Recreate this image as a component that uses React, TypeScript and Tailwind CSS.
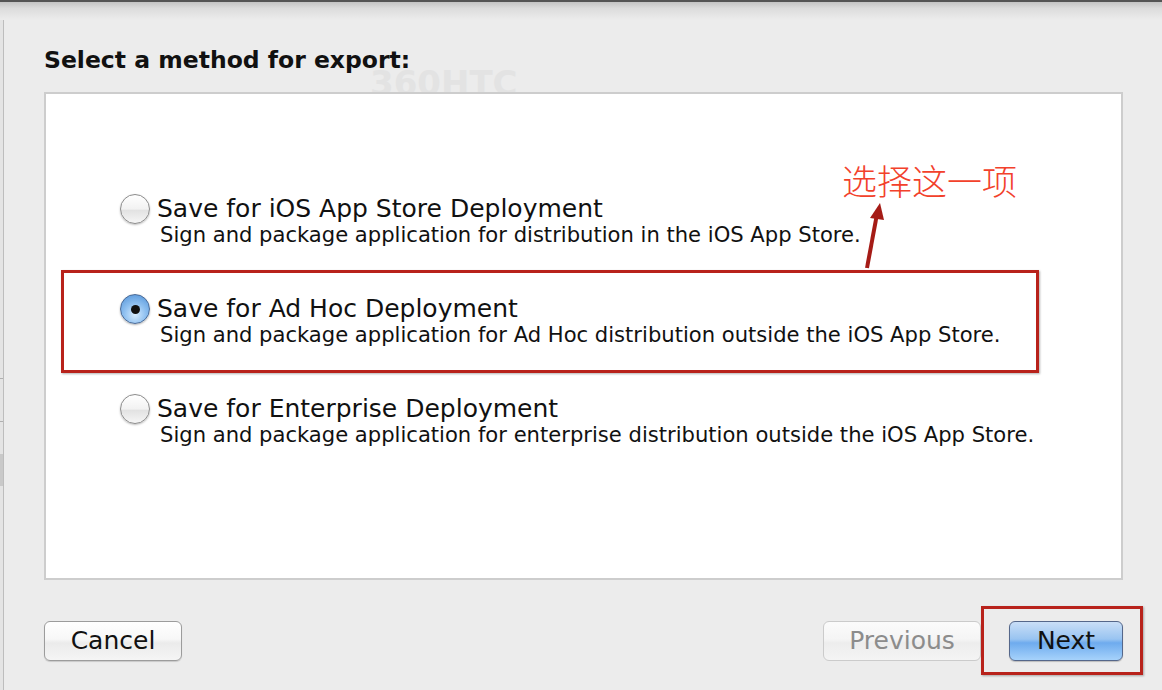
import { useState } from 'react';

const font = { fontFamily: '"DejaVu Sans", "Noto Sans CJK SC", sans-serif' };

const options = [
  {
    title: 'Save for iOS App Store Deployment',
    desc: 'Sign and package application for distribution in the iOS App Store.',
  },
  {
    title: 'Save for Ad Hoc Deployment',
    desc: 'Sign and package application for Ad Hoc distribution outside the iOS App Store.',
  },
  {
    title: 'Save for Enterprise Deployment',
    desc: 'Sign and package application for enterprise distribution outside the iOS App Store.',
  },
];

const Radio = ({ checked }: { checked: boolean }) =>
  checked ? (
    <span className="flex h-[30px] w-[30px] shrink-0 items-center justify-center rounded-full border border-[#4a6a96] bg-[radial-gradient(circle_at_50%_70%,#d6ecff_0%,#8fc0f0_45%,#4d8fd6_100%)] shadow-[0_1px_2px_rgba(0,0,0,0.3)]">
      <span className="h-[9px] w-[9px] rounded-full bg-[#111]" />
    </span>
  ) : (
    <span className="h-[30px] w-[30px] shrink-0 rounded-full border border-[#8c8c8c] bg-[linear-gradient(#ffffff,#f2f2f2_50%,#e2e2e2_55%,#f6f6f6)] shadow-[0_1px_2px_rgba(0,0,0,0.25)]" />
  );

export default function App() {
  const [selected, setSelected] = useState(1);

  return (
    <div className="relative h-[690px] w-[1162px] overflow-hidden bg-[#ececec]" style={font}>
      {/* window top edge */}
      <div className="h-[2px] bg-[#555]" />
      <div className="h-[18px] bg-[linear-gradient(#c4c4c4,#dcdcdc_35%,#ececec)]" />

      <div className="flex h-[670px]">
        {/* sliver of the window behind */}
        <div className="flex w-[4px] shrink-0 flex-col border-r border-[#bdbdbd] bg-[#e4e4e4]">
          <div className="h-[358px]" />
          <div className="h-[44px] border-y border-[#b0b0b0]" />
          <div className="mt-[32px] h-[32px] bg-[#c9c9c9]" />
        </div>

        <div className="flex flex-1 flex-col pl-[40px] pr-[39px]">
          <h1 className="relative mt-[26px] text-[23.5px] font-bold leading-[28px] text-[#111]">
            Select a method for export:
          </h1>
          <div className="pointer-events-none absolute left-[370px] top-[63px] select-none text-[34px] font-bold leading-[40px] text-[#e3e3e3]">
            360HTC
          </div>

          <div className="relative mt-[18px] flex h-[488px] flex-col border-2 border-[#cdcdcd] bg-white pl-[74px] pt-[100px]">
            {options.map((o, i) => (
              <label
                key={o.title}
                className="flex h-[100px] cursor-default items-start gap-[7px]"
                onClick={() => setSelected(i)}
              >
                <Radio checked={selected === i} />
                <div className="flex flex-col pt-[2px]">
                  <span className="w-fit text-[25px] leading-[26px] text-[#111]">{o.title}</span>
                  <span className="ml-[3px] mt-[1px] w-fit text-[21.1px] leading-[24px] text-[#111]">{o.desc}</span>
                </div>
              </label>
            ))}
          </div>

          <div className="mt-[41px] flex items-center">
            <button className="h-[40px] w-[138px] rounded-[6px] border border-[#9c9c9c] bg-[linear-gradient(#ffffff,#f7f7f7_45%,#ebebeb_55%,#f5f5f5)] text-[25px] text-[#111] shadow-[0_1px_1px_rgba(0,0,0,0.15)]">
              Cancel
            </button>
            <div className="flex-1" />
            <button
              disabled
              className="h-[40px] w-[158px] rounded-[6px] border border-[#cbcbcb] bg-[linear-gradient(#fbfbfb,#f5f5f5_45%,#ededed_55%,#f4f4f4)] text-[25px] text-[#8c8c8c]"
            >
              Previous
            </button>
            <button className="ml-[28px] h-[40px] w-[114px] rounded-[6px] border border-[#55678a] bg-[linear-gradient(#c9def7,#99c4f1_45%,#6eabee_55%,#a6d2fb)] text-[25px] text-[#111] shadow-[0_1px_1px_rgba(0,0,0,0.2)]">
              Next
            </button>
          </div>
        </div>
      </div>

      {/* annotations */}
      <div className="pointer-events-none absolute left-[61px] top-[270px] h-[103px] w-[978px] border-[3px] border-[#b8221b] shadow-[1px_1px_2px_rgba(0,0,0,0.3)]" />
      <div className="pointer-events-none absolute left-[981px] top-[606px] h-[69px] w-[162px] border-[3px] border-[#b8221b] shadow-[1px_1px_2px_rgba(0,0,0,0.3)]" />
      <svg className="pointer-events-none absolute left-0 top-0" width="1162" height="690">
        <line x1="867" y1="268" x2="877" y2="214" stroke="#a51b16" strokeWidth="4" />
        <polygon points="880,203 870,218 884,220" fill="#a51b16" />
      </svg>
      <div
        className="pointer-events-none absolute left-[842px] top-[158px] text-[35px] leading-[44px] text-[#f2412b]"
        style={{ fontFamily: '"Noto Sans CJK SC", sans-serif', fontWeight: 300 }}
      >
        选择这一项
      </div>
    </div>
  );
}
